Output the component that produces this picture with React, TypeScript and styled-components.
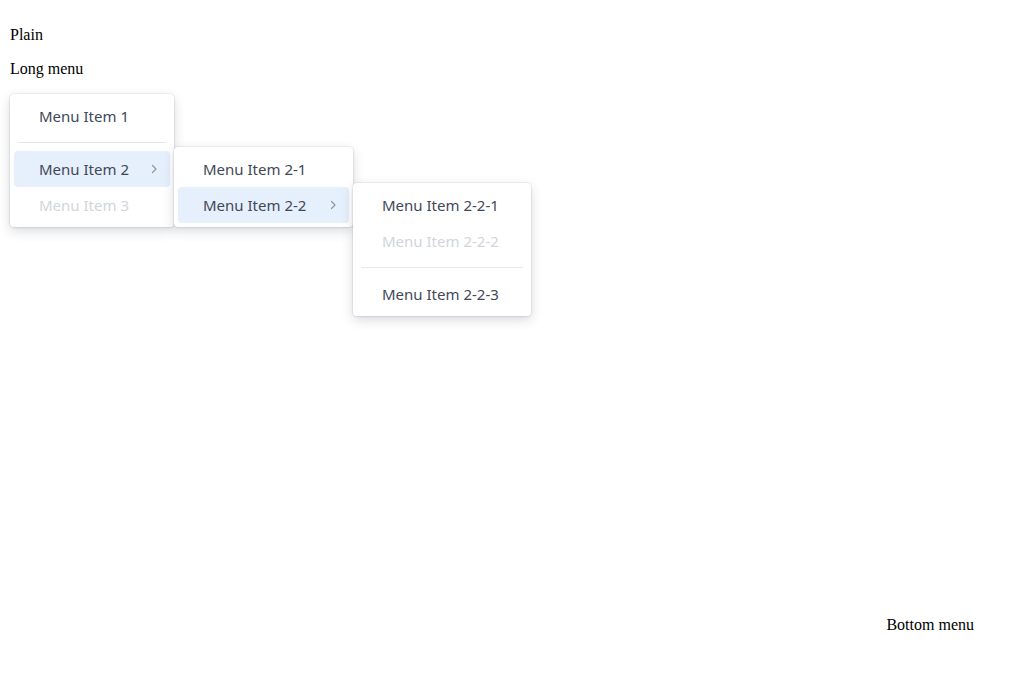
import React from "react";
import styled, { createGlobalStyle } from "styled-components";

const Global = createGlobalStyle`
  html, body { margin: 0; padding: 0; background: #fff; }
  body { font-family: "Liberation Serif", serif; font-size: 16px; }
`;

const Page = styled.div`
  box-sizing: border-box;
  height: 700px;
  padding: 10px;
  display: flex;
  flex-direction: column;
`;

const Trigger = styled.p<{ $align?: "end" }>`
  margin: 16px 0 0;
  line-height: 18px;
  align-self: ${(p) => (p.$align === "end" ? "flex-end" : "flex-start")};
  margin-right: ${(p) => (p.$align === "end" ? "40px" : "0")};
`;

const Anchor = styled.div`
  position: relative;
`;

const Spacer = styled.div`
  flex: 1;
`;

const MenuPanel = styled.div<{ $w: number; $top?: string; $left?: string }>`
  position: absolute;
  top: ${(p) => p.$top ?? "calc(100% + 16px)"};
  left: ${(p) => p.$left ?? "0"};
  width: ${(p) => p.$w}px;
  box-sizing: border-box;
  padding: 4px;
  background: #fff;
  border-radius: 4px;
  box-shadow: 0 0 0 1px rgba(15, 23, 42, 0.05), 0 4px 12px rgba(30, 41, 59, 0.17),
    0 1px 3px rgba(30, 41, 59, 0.06);
  font-family: "Noto Sans", "Open Sans", sans-serif;
  font-size: 15px;
  z-index: 1;
`;

const Item = styled.div<{ $active?: boolean; $disabled?: boolean }>`
  position: relative;
  height: 36px;
  display: flex;
  align-items: center;
  padding: 0 12px 0 25px;
  border-radius: 4px;
  background: ${(p) => (p.$active ? "#e6effc" : "transparent")};
  color: ${(p) => (p.$disabled ? "#d1d5db" : "#414857")};
  white-space: nowrap;
`;

const Label = styled.span`
  flex: 1;
`;

const Separator = styled.div`
  height: 1px;
  background: #e5e7eb;
  margin: 8px 4px;
`;

const Chevron = () => (
  <svg width="8" height="10" viewBox="0 0 8 10" fill="none">
    <path d="M2.5 1.5 L6 5 L2.5 8.5" stroke="#8f96a3" strokeWidth="1.2" strokeLinecap="round" strokeLinejoin="round" />
  </svg>
);

export default function App() {
  return (
    <>
      <Global />
      <Page>
        <Trigger>Plain</Trigger>
        <Anchor>
          <Trigger>Long menu</Trigger>
          <MenuPanel $w={164}>
            <Item>
              <Label>Menu Item 1</Label>
            </Item>
            <Separator />
            <Item $active>
              <Label>Menu Item 2</Label>
              <Chevron />
              <MenuPanel $w={179} $top="-4px" $left="calc(100% + 4px)">
                <Item>
                  <Label>Menu Item 2-1</Label>
                </Item>
                <Item $active>
                  <Label>Menu Item 2-2</Label>
                  <Chevron />
                  <MenuPanel $w={178} $top="-4px" $left="calc(100% + 4px)">
                    <Item>
                      <Label>Menu Item 2-2-1</Label>
                    </Item>
                    <Item $disabled>
                      <Label>Menu Item 2-2-2</Label>
                    </Item>
                    <Separator />
                    <Item>
                      <Label>Menu Item 2-2-3</Label>
                    </Item>
                  </MenuPanel>
                </Item>
              </MenuPanel>
            </Item>
            <Item $disabled>
              <Label>Menu Item 3</Label>
            </Item>
          </MenuPanel>
        </Anchor>
        <Spacer />
        <Trigger $align="end" style={{ marginBottom: 56 }}>Bottom menu</Trigger>
      </Page>
    </>
  );
}
